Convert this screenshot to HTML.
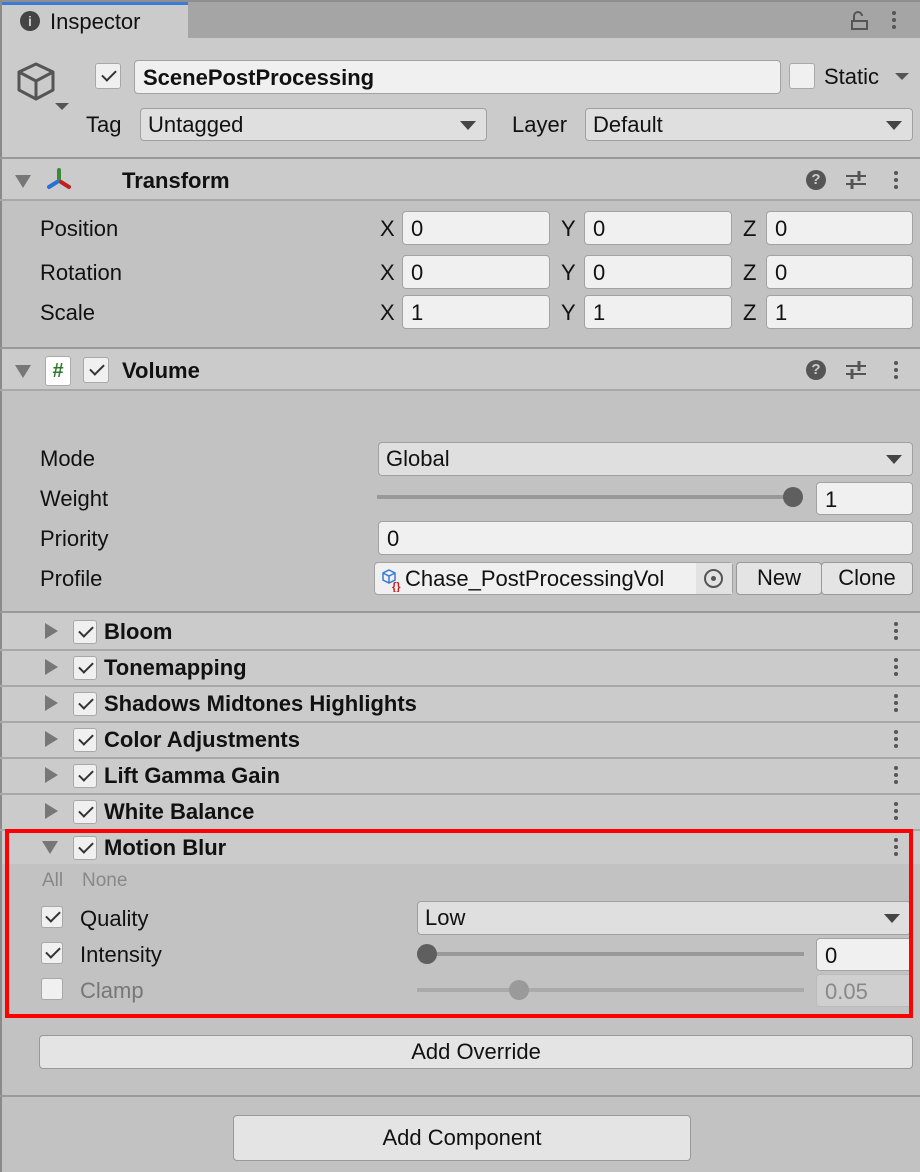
<!DOCTYPE html>
<html><head><style>
*{box-sizing:border-box;margin:0;padding:0}
body{width:920px;height:1172px;background:#c2c2c2;font-family:"Liberation Sans","DejaVu Sans",sans-serif;font-size:22px;color:#111;position:relative;overflow:hidden}
.a{position:absolute}
.t{position:absolute;line-height:1;white-space:nowrap}
.f{position:absolute;background:#f0f0f0;border:1.5px solid #a2a2a2;border-radius:4px;padding-left:8px;line-height:33px;font-size:22px}
.dd{position:absolute;background:#dfdfdf;border:1.5px solid #a0a0a0;border-radius:4px;padding-left:7px;line-height:31px}
.dd:after{content:"";position:absolute;right:10px;top:12px;border-left:8px solid transparent;border-right:8px solid transparent;border-top:9px solid #444}
.cb{position:absolute;width:24px;height:24px;background:#f0f0f0;border:1.5px solid #a8a8a8;border-radius:3px}
.cb.on:after{content:"";position:absolute;left:50%;top:45%;width:12px;height:6px;margin-left:-6px;margin-top:-5px;border-left:2px solid #333;border-bottom:2px solid #333;transform:rotate(-45deg)}
.hl{position:absolute;left:0;width:920px;height:2px;background:#999}
.sl{position:absolute;left:0;width:920px;height:1.5px;background:#a8a8a8}
.tri{position:absolute;border-left:8px solid transparent;border-right:8px solid transparent;border-top:13px solid #777}
.trr{position:absolute;border-top:8px solid transparent;border-bottom:8px solid transparent;border-left:13px solid #777}
.b{font-weight:bold}
.dots{position:absolute;width:4px}
.dots i{display:block;width:4px;height:4px;border-radius:2px;background:#555;margin-bottom:3px}
.btn{position:absolute;background:#e4e4e4;border:1.5px solid #999;border-radius:4px;text-align:center}
</style></head><body>
<div class="a" style="left:0;top:0;width:2px;height:1172px;background:#8a8a8a"></div>
<div class="a" style="left:2px;top:0;width:918px;height:38px;background:#a5a5a5;border-top:2px solid #8f8f8f"></div>
<div class="a" style="left:2px;top:2px;width:186px;height:37px;background:#cbcbcb;border-top:3px solid #3a7bd5"></div>
<div class="a" style="left:20px;top:11px;width:20px;height:20px;border-radius:10px;background:#444;color:#cbcbcb;font-size:14px;font-weight:bold;text-align:center;line-height:20px">i</div>
<div class="t" style="left:50px;top:11px">Inspector</div>
<svg class="a" style="left:850px;top:8px" width="22" height="24"><path d="M4 12 V8 a4 4 0 0 1 8 0 M2 13 h15 v8 h-15z" fill="none" stroke="#555" stroke-width="2"/></svg>
<div class="dots" style="left:892px;top:11px"><i></i><i></i><i></i></div>
<div class="a" style="left:2px;top:38px;width:918px;height:120px;background:#cbcbcb"></div>
<svg class="a" style="left:15px;top:60px" width="56" height="54"><path d="M21 4 L38 12 L38 30 L21 39 L4 30 L4 12 Z M4 12 L21 21 L38 12 M21 21 V39" fill="none" stroke="#555" stroke-width="3" stroke-linejoin="round"/><path d="M40 43 h14 l-7 7z" fill="#555"/></svg>
<div class="cb on" style="left:95px;top:63px;width:26px;height:26px"></div>
<div class="f b" style="left:134px;top:60px;width:647px;height:34px;line-height:34px">ScenePostProcessing</div>
<div class="cb" style="left:789px;top:63px;width:26px;height:26px"></div>
<div class="t" style="left:824px;top:66px">Static</div>
<div class="a" style="left:895px;top:73px;border-left:7px solid transparent;border-right:7px solid transparent;border-top:7px solid #555"></div>
<div class="t" style="left:86px;top:114px">Tag</div>
<div class="dd" style="left:140px;top:108px;width:347px;height:33px">Untagged</div>
<div class="t" style="left:512px;top:114px">Layer</div>
<div class="dd" style="left:585px;top:108px;width:328px;height:33px">Default</div>
<div class="hl" style="top:157px"></div>
<div class="a" style="left:2px;top:159px;width:918px;height:41px;background:#cbcbcb"></div>
<div class="sl" style="top:199px"></div>
<div class="tri" style="left:15px;top:175px"></div>
<svg class="a" style="left:44px;top:167px" width="30" height="28"><path d="M15 3 V12" stroke="#3a8a3a" stroke-width="4" stroke-linecap="round"/><path d="M13 15 L5 20" stroke="#2a6fd6" stroke-width="4" stroke-linecap="round"/><path d="M17 15 L25 20" stroke="#c02020" stroke-width="4" stroke-linecap="round"/></svg>
<div class="t b" style="left:122px;top:170px">Transform</div>
<div class="a" style="left:806px;top:170px;width:20px;height:20px;border-radius:10px;background:#555;color:#cbcbcb;font-size:15px;font-weight:bold;text-align:center;line-height:20px">?</div>
<svg class="a" style="left:845px;top:169px" width="22" height="22"><path d="M1 7 h20 M1 15 h20" stroke="#555" stroke-width="2"/><path d="M14 2 v10 M7 10 v10" stroke="#555" stroke-width="3"/></svg>
<div class="dots" style="left:894px;top:171px"><i></i><i></i><i></i></div>
<div class="t" style="left:40px;top:218px">Position</div>
<div class="t" style="left:40px;top:262px">Rotation</div>
<div class="t" style="left:40px;top:302px">Scale</div>
<div class="t" style="left:380px;top:218px">X</div><div class="f" style="left:402px;top:211px;width:148px;height:34px">0</div>
<div class="t" style="left:561px;top:218px">Y</div><div class="f" style="left:584px;top:211px;width:148px;height:34px">0</div>
<div class="t" style="left:743px;top:218px">Z</div><div class="f" style="left:766px;top:211px;width:147px;height:34px">0</div>
<div class="t" style="left:380px;top:262px">X</div><div class="f" style="left:402px;top:255px;width:148px;height:34px">0</div>
<div class="t" style="left:561px;top:262px">Y</div><div class="f" style="left:584px;top:255px;width:148px;height:34px">0</div>
<div class="t" style="left:743px;top:262px">Z</div><div class="f" style="left:766px;top:255px;width:147px;height:34px">0</div>
<div class="t" style="left:380px;top:302px">X</div><div class="f" style="left:402px;top:295px;width:148px;height:34px">1</div>
<div class="t" style="left:561px;top:302px">Y</div><div class="f" style="left:584px;top:295px;width:148px;height:34px">1</div>
<div class="t" style="left:743px;top:302px">Z</div><div class="f" style="left:766px;top:295px;width:147px;height:34px">1</div>
<div class="hl" style="top:347px"></div>
<div class="a" style="left:2px;top:349px;width:918px;height:41px;background:#cbcbcb"></div>
<div class="sl" style="top:389px"></div>
<div class="tri" style="left:15px;top:365px"></div>
<div class="a" style="left:45px;top:356px;width:26px;height:30px;background:#fff;border:1px solid #aaa;border-radius:3px;color:#2f7a2f;font-weight:bold;font-size:20px;text-align:center;line-height:28px">#</div>
<div class="cb on" style="left:83px;top:357px;width:26px;height:26px"></div>
<div class="t b" style="left:122px;top:360px">Volume</div>
<div class="a" style="left:806px;top:360px;width:20px;height:20px;border-radius:10px;background:#555;color:#cbcbcb;font-size:15px;font-weight:bold;text-align:center;line-height:20px">?</div>
<svg class="a" style="left:845px;top:359px" width="22" height="22"><path d="M1 7 h20 M1 15 h20" stroke="#555" stroke-width="2"/><path d="M14 2 v10 M7 10 v10" stroke="#555" stroke-width="3"/></svg>
<div class="dots" style="left:894px;top:361px"><i></i><i></i><i></i></div>
<div class="t" style="left:40px;top:448px">Mode</div>
<div class="dd" style="left:378px;top:442px;width:535px;height:34px">Global</div>
<div class="t" style="left:40px;top:488px">Weight</div>
<div class="a" style="left:377px;top:495px;width:416px;height:4px;background:#999"></div>
<div class="a" style="left:783px;top:487px;width:20px;height:20px;border-radius:10px;background:#5f5f5f"></div>
<div class="f" style="left:816px;top:482px;width:97px;height:33px">1</div>
<div class="t" style="left:40px;top:528px">Priority</div>
<div class="f" style="left:378px;top:521px;width:535px;height:34px">0</div>
<div class="t" style="left:40px;top:568px">Profile</div>
<div class="f" style="left:374px;top:562px;width:359px;height:33px;padding-left:30px;overflow:hidden;line-height:31px">Chase_PostProcessingVol</div>
<svg class="a" style="left:381px;top:568px" width="24" height="24"><path d="M8 2 L14 5 V12 L8 15 L2 12 V5Z M2 5 L8 8 L14 5 M8 8 V15" fill="none" stroke="#3a7bd5" stroke-width="1.5"/><text x="11" y="22" font-size="11" fill="#c02020" font-family="Liberation Sans" font-weight="bold">{}</text></svg>
<div class="a" style="left:696px;top:563px;width:36px;height:31px;background:#e2e2e2"></div>
<div class="a" style="left:704px;top:569px;width:19px;height:19px;border-radius:10px;border:2px solid #555"></div>
<div class="a" style="left:711px;top:576px;width:5px;height:5px;border-radius:3px;background:#555"></div>
<div class="btn" style="left:736px;top:562px;width:86px;height:33px;line-height:30px">New</div>
<div class="btn" style="left:821px;top:562px;width:92px;height:33px;line-height:30px">Clone</div>
<div class="hl" style="top:611px"></div>
<div class="a" style="left:2px;top:613px;width:918px;height:251px;background:#cbcbcb"></div>
<div class="sl" style="top:649px"></div><div class="sl" style="top:685px"></div><div class="sl" style="top:721px"></div><div class="sl" style="top:757px"></div><div class="sl" style="top:793px"></div><div class="sl" style="top:829px"></div>
<div class="trr" style="left:45px;top:623px"></div><div class="cb on" style="left:73px;top:620px"></div><div class="t b" style="left:104px;top:621px">Bloom</div><div class="dots" style="left:894px;top:622px"><i></i><i></i><i></i></div>
<div class="trr" style="left:45px;top:659px"></div><div class="cb on" style="left:73px;top:656px"></div><div class="t b" style="left:104px;top:657px">Tonemapping</div><div class="dots" style="left:894px;top:658px"><i></i><i></i><i></i></div>
<div class="trr" style="left:45px;top:695px"></div><div class="cb on" style="left:73px;top:692px"></div><div class="t b" style="left:104px;top:693px">Shadows Midtones Highlights</div><div class="dots" style="left:894px;top:694px"><i></i><i></i><i></i></div>
<div class="trr" style="left:45px;top:731px"></div><div class="cb on" style="left:73px;top:728px"></div><div class="t b" style="left:104px;top:729px">Color Adjustments</div><div class="dots" style="left:894px;top:730px"><i></i><i></i><i></i></div>
<div class="trr" style="left:45px;top:767px"></div><div class="cb on" style="left:73px;top:764px"></div><div class="t b" style="left:104px;top:765px">Lift Gamma Gain</div><div class="dots" style="left:894px;top:766px"><i></i><i></i><i></i></div>
<div class="trr" style="left:45px;top:803px"></div><div class="cb on" style="left:73px;top:800px"></div><div class="t b" style="left:104px;top:801px">White Balance</div><div class="dots" style="left:894px;top:802px"><i></i><i></i><i></i></div>
<div class="tri" style="left:42px;top:841px"></div><div class="cb on" style="left:73px;top:836px"></div><div class="t b" style="left:104px;top:837px">Motion Blur</div><div class="dots" style="left:894px;top:838px"><i></i><i></i><i></i></div>
<div class="a" style="left:2px;top:864px;width:918px;height:165px;background:#c2c2c2"></div>
<div class="t" style="left:42px;top:871px;font-size:19px;color:#888">All</div>
<div class="t" style="left:82px;top:871px;font-size:19px;color:#888">None</div>
<div class="cb on" style="left:41px;top:906px;width:22px;height:22px"></div>
<div class="t" style="left:80px;top:908px">Quality</div>
<div class="dd" style="left:417px;top:901px;width:494px;height:34px">Low</div>
<div class="cb on" style="left:41px;top:942px;width:22px;height:22px"></div>
<div class="t" style="left:80px;top:944px">Intensity</div>
<div class="a" style="left:417px;top:952px;width:387px;height:4px;background:#999"></div>
<div class="a" style="left:417px;top:944px;width:20px;height:20px;border-radius:10px;background:#5f5f5f"></div>
<div class="f" style="left:816px;top:938px;width:97px;height:33px">0</div>
<div class="cb" style="left:41px;top:978px;width:22px;height:22px"></div>
<div class="t" style="left:80px;top:980px;color:#777">Clamp</div>
<div class="a" style="left:417px;top:988px;width:387px;height:4px;background:#aaa"></div>
<div class="a" style="left:509px;top:980px;width:20px;height:20px;border-radius:10px;background:#9a9a9a"></div>
<div class="f" style="left:816px;top:974px;width:97px;height:33px;background:#cfcfcf;border-color:#bbb;color:#888">0.05</div>
<div class="a" style="left:5px;top:829px;width:908px;height:189px;border:4px solid #ff0000"></div>
<div class="btn" style="left:39px;top:1035px;width:874px;height:34px;line-height:32px">Add Override</div>
<div class="hl" style="top:1095px"></div>
<div class="btn" style="left:233px;top:1115px;width:458px;height:46px;line-height:44px">Add Component</div>
</body></html>
